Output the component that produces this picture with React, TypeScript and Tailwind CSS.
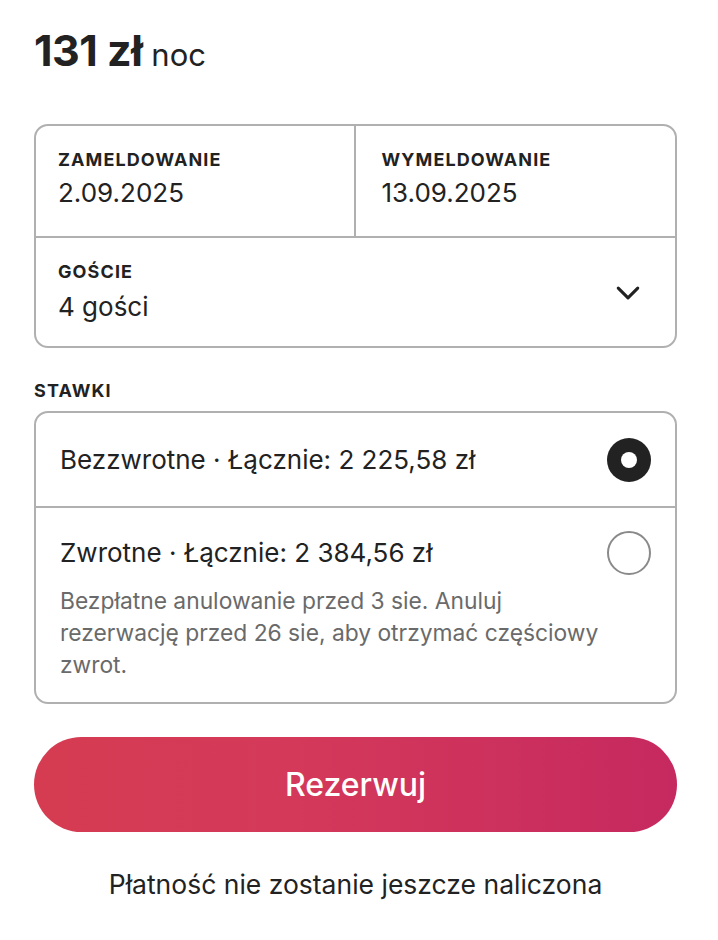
import React from "react";

export default function App() {
  return (
    <div className="min-h-screen bg-white text-[#222222]" style={{ fontFamily: "Inter, 'Noto Sans', sans-serif" }}>
      <div className="pl-[34px] pr-[41px] pt-[24px]">
        <div className="flex items-baseline gap-[9px] h-[52px] leading-[52px]">
          <span className="text-[43px] font-bold tracking-[-0.5px]">131 zł</span>
          <span className="text-[31px] font-normal">noc</span>
        </div>

        <div className="mt-[48px] border-2 border-[#b0b0b0] rounded-[14px] overflow-hidden">
          <div className="grid grid-cols-2 h-[112px] border-b-2 border-[#b0b0b0]">
            <div className="border-r-2 border-[#b0b0b0] pl-[22px] pt-[23px]">
              <div className="text-[18px] font-bold leading-[22px] tracking-[1.1px]">ZAMELDOWANIE</div>
              <div className="text-[26px] leading-[32px] mt-[6px]">2.09.2025</div>
            </div>
            <div className="pl-[26px] pt-[23px]">
              <div className="text-[18px] font-bold leading-[22px] tracking-[1.1px]">WYMELDOWANIE</div>
              <div className="text-[26px] leading-[32px] mt-[6px]">13.09.2025</div>
            </div>
          </div>
          <div className="h-[108px] flex items-start justify-between pl-[22px] pr-[34px]">
            <div className="pt-[23px]">
              <div className="text-[18px] font-bold leading-[22px] tracking-[1.1px]">GOŚCIE</div>
              <div className="text-[26px] leading-[32px] mt-[8px]">4 gości</div>
            </div>
            <svg className="mt-[42px]" width="26" height="26" viewBox="0 0 32 32" fill="none" stroke="#222222" strokeWidth="3.8" strokeLinecap="round" strokeLinejoin="round">
              <path d="M4 10 L16 22 L28 10" />
            </svg>
          </div>
        </div>

        <div className="mt-[32px] text-[18px] font-bold leading-[22px] tracking-[1.1px]">STAWKI</div>

        <div className="mt-[9px] border-2 border-[#b0b0b0] rounded-[14px] overflow-hidden">
          <div className="h-[95px] flex items-center justify-between pl-[24px] pr-[24px] border-b-2 border-[#b0b0b0]">
            <span className="text-[26px] leading-[32px]">Bezzwrotne · Łącznie: 2 225,58 zł</span>
            <span className="w-[44px] h-[44px] rounded-full bg-[#222222] flex items-center justify-center">
              <span className="w-[16px] h-[16px] rounded-full bg-white" />
            </span>
          </div>
          <div className="pl-[24px] pr-[24px] pt-[29px] pb-[21px]">
            <div className="flex items-center justify-between h-[32px]">
              <span className="text-[26px] leading-[32px]">Zwrotne · Łącznie: 2 384,56 zł</span>
              <span className="w-[44px] h-[44px] rounded-full border-2 border-[#8a8a8a]" />
            </div>
            <div className="mt-[16px] text-[22.8px] leading-[32px] text-[#6a6a6a] max-w-[560px]">
              Bezpłatne anulowanie przed 3 sie. Anuluj
              <br />
              rezerwację przed 26 sie, aby otrzymać częściowy zwrot.
            </div>
          </div>
        </div>

        <button className="mt-[33px] w-full h-[95px] rounded-full text-white text-[32px] font-medium bg-[linear-gradient(to_right,#d53c51,#d4395a_40%,#c6295f_100%)]">
          Rezerwuj
        </button>

        <div className="mt-[36px] text-center text-[26.5px] leading-[32px]">Płatność nie zostanie jeszcze naliczona</div>
      </div>
    </div>
  );
}
